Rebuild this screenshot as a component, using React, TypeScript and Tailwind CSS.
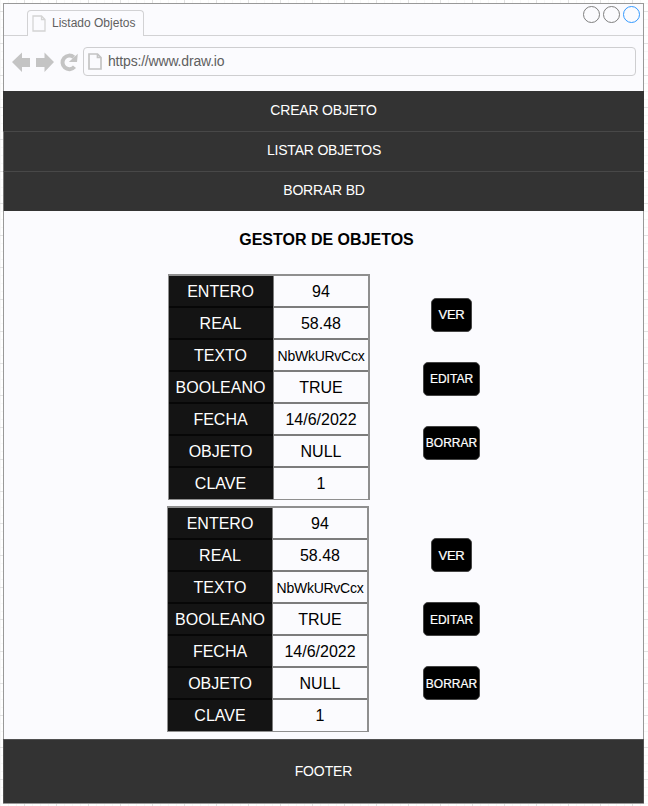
import React from "react";

const rows = [
  { label: "ENTERO", value: "94" },
  { label: "REAL", value: "58.48" },
  { label: "TEXTO", value: "NbWkURvCcx", small: true },
  { label: "BOOLEANO", value: "TRUE" },
  { label: "FECHA", value: "14/6/2022" },
  { label: "OBJETO", value: "NULL" },
  { label: "CLAVE", value: "1" },
];

function PageIcon({ className, color, width }: { className: string; color: string; width: number }) {
  return (
    <svg className={className} viewBox="0 0 14 17" fill="none" stroke={color} strokeWidth={width}>
      <path d="M1 1H9.5L13 4.5V16H1Z" />
      <path d="M9.5 1V4.5H13" />
    </svg>
  );
}

function BrowserBar() {
  return (
    <header className="h-[87px] shrink-0">
      <div className="flex h-8 border-b border-[#d2d2d4]">
        <div className="ml-[23px] mt-1.5 flex h-[26px] w-[117px] rounded-t-[4px] border border-b-0 border-[#d2d2d4] bg-[#fbfbfe] pl-1 pt-1">
          <PageIcon className="h-[17px] w-[14px]" color="#d4d4d4" width={1.3} />
          <span className="ml-1.5 whitespace-nowrap text-[12px] leading-4 text-[#606060]">Listado Objetos</span>
        </div>
        <div className="ml-auto mr-[3px] mt-[2px] flex gap-[3px]">
          <i className="size-[17px] rounded-full border border-[#7f7f7f]" />
          <i className="size-[17px] rounded-full border border-[#7f7f7f]" />
          <i className="size-[17px] rounded-full border border-[#3399ff]" />
        </div>
      </div>
      <div className="flex pl-2 pt-[11px]">
        <svg className="mt-[5px] h-[20px] w-[67px]" viewBox="12 52 67 20">
          <path d="M12 62L22 52.500V58H30V67H22V72Z" fill="#c4c4c4" />
          <path d="M54 62L44.500 52.500V58H36V67H44.500V72Z" fill="#c4c4c4" />
          <path d="M74.500 66.800A6.800 6.800 0 1 1 73.800 57.300" fill="none" stroke="#c4c4c4" strokeWidth="4" />
          <path d="M77.800 53.800L77 62H68.800Z" fill="#c4c4c4" />
        </svg>
        <div className="ml-1 flex h-[29px] w-[553px] rounded-[4px] border border-[#ceced0] pl-1 pt-[5px]">
          <PageIcon className="h-[17px] w-[14px]" color="#c4c4c4" width={1.7} />
          <span className="ml-1.5 text-[14px] leading-4 tracking-[-0.18px] text-[#606060]">https://www.draw.io</span>
        </div>
      </div>
    </header>
  );
}

function DataTable({ shift }: { shift?: boolean }) {
  return (
    <div
      className={
        "-mt-px flex h-[226px] w-[202px] flex-col border border-t-2 border-r-2 border-[#8f8f8f] " +
        (shift ? "ml-[163px]" : "ml-[164px]")
      }
    >
      {rows.map((r, i) => (
        <div key={r.label} className={"flex " + (i < 6 ? "h-8" : "h-[31px]")}>
          <div
            className={
              "flex items-center justify-center bg-[#141414] text-[16px] text-white " +
              (shift ? "w-[104px] " : "w-[104px] pr-px ") +
              (i < 6 ? "border-b-2 border-[#070707] pt-[2px]" : "")
            }
          >
            {r.label}
          </div>
          <div
            className={
              "flex flex-1 items-center justify-center border-l border-[#7c7c7c] text-black " +
              (i < 6 ? "border-b-2 pt-[2px] " : "") +
              (r.small ? "text-[14px] tracking-[-0.25px]" : "text-[16px]")
            }
          >
            {r.value}
          </div>
        </div>
      ))}
    </div>
  );
}

function Actions({ low }: { low?: boolean }) {
  const text = low ? " pt-[2px]" : "";
  return (
    <div className="flex w-[57px] flex-col items-center gap-[30px] text-[12px] text-white [-webkit-text-stroke:0.2px_white]">
      <button className={"h-[34px] w-[41px] rounded-[5px] border border-[#444] bg-black text-[13px] tracking-[-0.2px]" + text}>VER</button>
      <button className={"h-[34px] w-[57px] rounded-[5px] border border-[#444] bg-black" + text}>EDITAR</button>
      <button className={"h-[34px] w-[57px] rounded-[5px] border border-[#444] bg-black" + text}>BORRAR</button>
    </div>
  );
}

export default function App() {
  return (
    <div className="h-[806px] w-[648px] overflow-hidden bg-white bg-[linear-gradient(90deg,#e2e2e2_1px,transparent_1px),linear-gradient(#e2e2e2_1px,transparent_1px),linear-gradient(90deg,#f7f7f7_1px,transparent_1px),linear-gradient(#f7f7f7_1px,transparent_1px)] bg-[length:32px_32px,32px_32px,8px_8px,8px_8px] bg-[position:24px_11px,24px_11px,0px_3px,0px_3px] pl-[3px] pt-[3px] font-['Liberation_Sans',Arial,sans-serif]">
      <div className="flex h-[801px] w-[641px] flex-col border border-[#999] bg-[#fbfbfe]">
        <BrowserBar />
        <nav className="-mx-px shrink-0 text-center text-[14px] tracking-[-0.2px] text-white">
          <div className="h-10 bg-[#333] leading-[38px]">CREAR OBJETO</div>
          <div className="h-10 border-l border-t border-l-[#777] border-t-[#484848] bg-[#333] leading-[36px]">LISTAR OBJETOS</div>
          <div className="h-10 border-l border-t border-l-[#777] border-t-[#484848] bg-[#333] leading-[36px]">BORRAR BD</div>
        </nav>
        <main className="h-[528px] shrink-0 text-black">
          <h1 className="h-[64px] pl-1.5 pt-[19px] text-center text-[16px] font-bold leading-[20px]">GESTOR DE OBJETOS</h1>
          <section className="flex h-[232px]">
            <DataTable />
            <div className="ml-[53px] mt-[23px]"><Actions /></div>
          </section>
          <section className="flex">
            <DataTable shift />
            <div className="ml-[54px] mt-[31px]"><Actions low /></div>
          </section>
        </main>
        <footer className="-mx-px flex flex-1 items-center justify-center border border-b-0 border-[#505050] bg-[#333] text-[14px] tracking-[-0.1px] text-white">FOOTER</footer>
      </div>
    </div>
  );
}
